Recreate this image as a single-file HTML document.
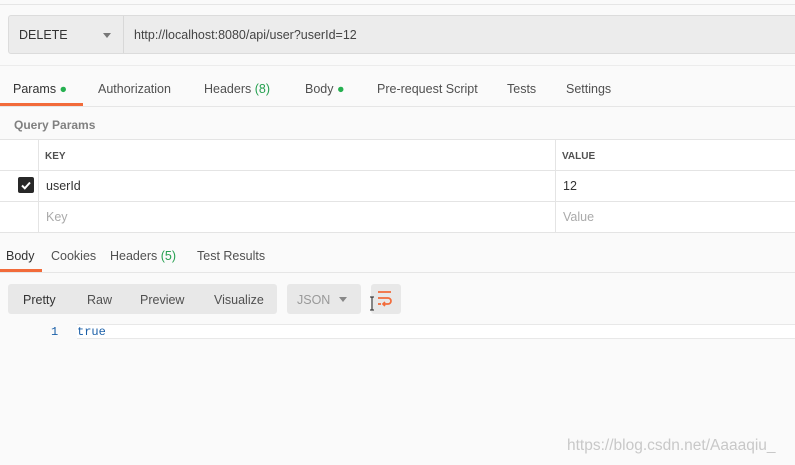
<!DOCTYPE html>
<html><head><style>
body{margin:0;width:795px;height:465px;background:#fafafa;font-family:"Liberation Sans",sans-serif;font-size:12.5px;color:#505050;position:relative;overflow:hidden}
.a{position:absolute}
.t{position:absolute;white-space:nowrap}
</style></head><body>
<div class="a" style="left:0;top:4px;width:795px;height:1px;background:#e6e6e6"></div>
<div class="a" style="left:8px;top:15px;width:790px;height:39px;background:#ececec;border:1px solid #dcdcdc;border-radius:3px;box-sizing:border-box"></div>
<div class="a" style="left:123px;top:16px;width:1px;height:37px;background:#d8d8d8"></div>
<div class="t" style="left:19px;top:28px;color:#333">DELETE</div>
<div class="a" style="left:103px;top:33px;border-left:4px solid transparent;border-right:4px solid transparent;border-top:5px solid #777"></div>
<div class="t" style="left:134px;top:28px;color:#444">http://localhost:8080/api/user?userId=12</div>
<div class="a" style="left:0;top:65px;width:795px;height:1px;background:#ececec"></div>
<div class="t" style="left:13px;top:82px;color:#333">Params <span style="color:#26b050">●</span></div>
<div class="t" style="left:98px;top:82px">Authorization</div>
<div class="t" style="left:204px;top:82px">Headers <span style="color:#26a050">(8)</span></div>
<div class="t" style="left:305px;top:82px">Body <span style="color:#26b050">●</span></div>
<div class="t" style="left:377px;top:82px">Pre-request Script</div>
<div class="t" style="left:507px;top:82px">Tests</div>
<div class="t" style="left:566px;top:82px">Settings</div>
<div class="a" style="left:0;top:103px;width:83px;height:3px;background:#f26b3a"></div>
<div class="a" style="left:0;top:106px;width:795px;height:1px;background:#e6e6e6"></div>
<div class="t" style="left:14px;top:118px;color:#808080;font-weight:bold;font-size:12px">Query Params</div>
<div class="a" style="left:0;top:139px;width:795px;height:94px;background:#fff;border-top:1px solid #e4e4e4;border-bottom:1px solid #e4e4e4;box-sizing:border-box"></div>
<div class="a" style="left:0;top:170px;width:795px;height:1px;background:#e4e4e4"></div>
<div class="a" style="left:0;top:201px;width:795px;height:1px;background:#e4e4e4"></div>
<div class="a" style="left:38px;top:139px;width:1px;height:94px;background:#e4e4e4"></div>
<div class="a" style="left:555px;top:139px;width:1px;height:94px;background:#e4e4e4"></div>
<div class="t" style="left:45px;top:151px;font-size:10px;font-weight:bold;color:#505050">KEY</div>
<div class="t" style="left:562px;top:151px;font-size:10px;font-weight:bold;color:#505050">VALUE</div>
<div class="a" style="left:18px;top:177px;width:16px;height:16px;background:#282828;border-radius:2px"></div>
<svg class="a" style="left:18px;top:177px" width="16" height="16"><path d="M4 8.5l2.8 2.8L12 5.5" stroke="#fff" stroke-width="2" fill="none"/></svg>
<div class="t" style="left:46px;top:179px;color:#333">userId</div>
<div class="t" style="left:563px;top:179px;color:#333">12</div>
<div class="t" style="left:46px;top:210px;color:#aaa">Key</div>
<div class="t" style="left:563px;top:210px;color:#aaa">Value</div>
<div class="t" style="left:6px;top:249px;color:#333">Body</div>
<div class="t" style="left:51px;top:249px">Cookies</div>
<div class="t" style="left:110px;top:249px">Headers <span style="color:#26a050">(5)</span></div>
<div class="t" style="left:197px;top:249px">Test Results</div>
<div class="a" style="left:0;top:269px;width:42px;height:3px;background:#f26b3a"></div>
<div class="a" style="left:0;top:272px;width:795px;height:1px;background:#e6e6e6"></div>
<div class="a" style="left:8px;top:284px;width:269px;height:30px;background:#e8e8e8;border-radius:3px"></div>
<div class="t" style="left:23px;top:293px;color:#333">Pretty</div>
<div class="t" style="left:87px;top:293px">Raw</div>
<div class="t" style="left:140px;top:293px">Preview</div>
<div class="t" style="left:214px;top:293px">Visualize</div>
<div class="a" style="left:287px;top:284px;width:74px;height:30px;background:#e8e8e8;border-radius:3px"></div>
<div class="t" style="left:297px;top:293px;color:#999">JSON</div>
<div class="a" style="left:339px;top:297px;border-left:4px solid transparent;border-right:4px solid transparent;border-top:5px solid #888"></div>
<div class="a" style="left:371px;top:284px;width:30px;height:30px;background:#e8e8e8;border-radius:3px"></div>
<svg class="a" style="left:366px;top:284px" width="40" height="30"><path d="M12 8h13M12 14h10a3 3 0 0 1 0 6h-5M12 20h3M19 18l-2 2 2 2" stroke="#f26b3a" stroke-width="1.7" fill="none"/><path d="M4 13h4M6 13v13M4 26h4" stroke="#222" stroke-width="1" fill="none"/></svg>
<div class="a" style="left:77px;top:324px;width:718px;height:15px;background:#fff;border-top:1px solid #e8e8e8;border-bottom:1px solid #e8e8e8;box-sizing:border-box"></div>
<div class="t" style="left:51px;top:325px;font-family:'Liberation Mono',monospace;font-size:12px;color:#1a5fa8">1</div>
<div class="t" style="left:77px;top:325px;font-family:'Liberation Mono',monospace;font-size:12px;color:#1a5fa8">true</div>
<div class="t" style="left:567px;top:437px;color:#c8c8c8;font-size:15.5px">https://blog.csdn.net/Aaaaqiu_</div>
</body></html>
